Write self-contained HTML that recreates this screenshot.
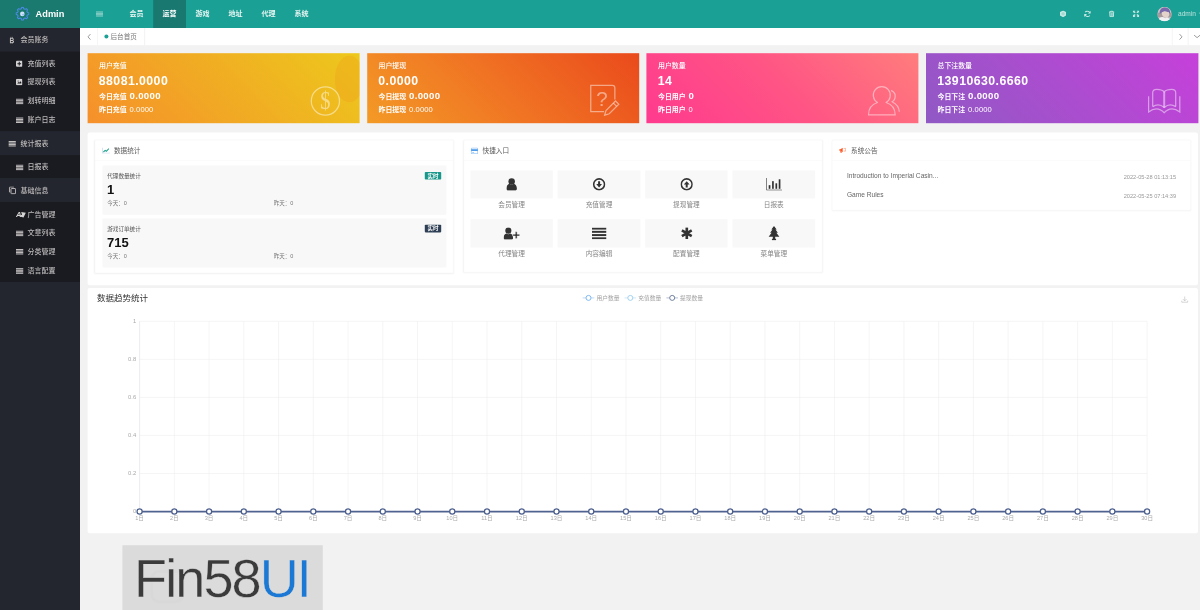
<!DOCTYPE html><html lang="zh-CN"><head><meta charset="utf-8"><title>Admin</title><style>
*{box-sizing:border-box;margin:0;padding:0}
html,body{width:1200px;height:610px;overflow:hidden;background:#f2f2f2;font-family:"Liberation Sans","Noto Sans CJK SC",sans-serif;color:#333}
.abs{position:absolute}
#root{position:absolute;left:0;top:0;width:3000px;height:1525px;transform:scale(.4);transform-origin:0 0;overflow:hidden;filter:contrast(1.0001)}
#side{position:absolute;left:0;top:0;width:200px;height:1525px;background:#23262e}
#logo{position:absolute;left:0;top:0;width:200px;height:70px;background:#1a7a6f}
#logo .t{position:absolute;left:88.75px;top:16.75px;font-size:24px;font-weight:bold;color:#fff;line-height:35px;transform:scaleX(.96);transform-origin:0 0}
.grp{position:absolute;left:0;width:200px;height:60px;background:#23262e;color:#bcb8b8;font-size:17.5px;line-height:60px;font-weight:500}
.grp span{position:absolute;left:51.25px;top:0}
.sub{position:absolute;left:0;width:200px;background:#191b21}
.it{position:absolute;left:0;width:200px;height:47.5px;color:#bcb8b8;font-size:17.5px;line-height:47.5px;font-weight:500}
.it span{position:absolute;left:68.75px;top:0}
.ic{position:absolute;display:block}
#head{position:absolute;left:200px;top:0;width:2800px;height:70px;background:#1aa094}
.nav{position:absolute;top:0;height:70px;width:82.5px;text-align:center;color:#e4f4f2;font-size:17.5px;line-height:70px;font-weight:bold}
.nav.on{background:#197971;color:#fff}
#tabs{position:absolute;left:200px;top:70px;width:2800px;height:42.5px;background:#fff}
.vsep{position:absolute;top:0;width:2.5px;height:42.5px;background:#f4f4f4}
.card{position:absolute;top:132.5px;width:680px;height:175px;color:#fff;overflow:hidden}
.card .l1{position:absolute;left:28.75px;top:20.75px;font-size:17.25px;line-height:22.5px;font-weight:500}
.card .l2{position:absolute;left:28.25px;top:51.75px;font-size:30.75px;line-height:37.5px;font-weight:bold;letter-spacing:1.1px}
.card .l3{position:absolute;left:28.75px;top:90px;font-size:17.25px;line-height:32.5px;font-weight:bold;white-space:nowrap}
.card .l3 b{font-size:24px;letter-spacing:0.8px;margin-left:2.5px}
.card .l4{position:absolute;left:28.75px;top:131.25px;font-size:17.25px;line-height:22.5px;font-weight:bold;white-space:nowrap}
.card .l4 i{font-style:normal;font-weight:normal;font-size:19px;margin-left:2.5px;letter-spacing:0.25px}
#mid{position:absolute;left:218.75px;top:331.25px;width:2776.25px;height:381.25px;background:#fff;border-radius:5px}
.pan{position:absolute;top:350px;width:897.25px;background:#fff;border:1.25px solid #f4f4f4;border-radius:3.75px;box-shadow:0 0.75px 5px rgba(0,0,0,.06)}
.pan .hd{position:absolute;left:0;top:0;width:100%;height:50.75px;border-bottom:1.25px solid #f6f6f6;font-size:16.5px;line-height:52px;color:#5a5a5a}
.pan .hd span{position:absolute;left:47px;top:0}
.sbox{position:absolute;left:17.5px;width:860px;height:123.25px;background:#f8f8f8;border-radius:2.5px}
.sbox .a{position:absolute;left:12.5px;top:16.75px;font-size:14px;line-height:20px;color:#555}
.sbox .b{position:absolute;left:12px;top:42.5px;font-size:32.5px;line-height:37.5px;font-weight:bold;color:#111}
.sbox .c{position:absolute;top:84px;font-size:13.75px;line-height:20px;color:#777}
.badge{position:absolute;right:12.5px;top:16.75px;width:40.75px;height:19px;border-radius:2px;color:#fff;font-size:13.75px;line-height:19px;text-align:center;font-weight:bold}
.q{position:absolute;width:206.5px;height:70.25px;background:#f8f8f8}
.ql{position:absolute;width:206.5px;text-align:center;font-size:16.625px;line-height:22.5px;color:#858585}
.nrow{position:absolute;left:36.5px;font-size:16.5px;line-height:22.5px;color:#666}
.ndate{position:absolute;right:35.75px;font-size:14.125px;line-height:22.5px;color:#999}
#chart{position:absolute;left:218.75px;top:720px;width:2776.25px;height:612.5px;background:#fff;border-radius:5px}
#wm{position:absolute;left:305.75px;top:1362.5px;width:501.25px;height:162.5px;background:#dbdbdb;overflow:hidden}
#wm .t{position:absolute;left:29.5px;top:8.5px;font-size:135px;line-height:150px;color:#3b3b3b;letter-spacing:-4.75px;white-space:nowrap;-webkit-text-stroke:1px #dbdbdb}
#wm .g{position:absolute;left:70px;top:62.5px;width:85px;height:82.5px;border:7.5px solid #d8d8d8;border-radius:22.5px}
#wm .u{position:absolute;left:185px;top:136.25px;font-size:13.75px;line-height:20px;letter-spacing:6.5px;color:#cbcbcb;white-space:nowrap}
#wm .t b{font-weight:normal;color:#1b78d4}
</style></head><body><div id="root"><div id="side"><div id="logo"><svg class="ic" style="left:37.75px;top:16px" width="36.5" height="36.5" viewBox="0 0 16 16"><path d="M7.07 1.06L8.93 1.06L9.41 2.68L10.76 3.24L12.25 2.44L13.56 3.75L12.76 5.24L13.32 6.59L14.94 7.07L14.94 8.93L13.32 9.41L12.76 10.76L13.56 12.25L12.25 13.56L10.76 12.76L9.41 13.32L8.93 14.94L7.07 14.94L6.59 13.32L5.24 12.76L3.75 13.56L2.44 12.25L3.24 10.76L2.68 9.41L1.06 8.93L1.06 7.07L2.68 6.59L3.24 5.24L2.44 3.75L3.75 2.44L5.24 3.24L6.59 2.68z" fill="none" stroke="#4b8ae6" stroke-width="1.15" stroke-linejoin="round"/><circle cx="7.8" cy="8.2" r="2.5" fill="#cfe0fb"/><circle cx="8.6" cy="9" r="1" fill="#8db4f2"/></svg><div class="t">Admin</div></div><div class="grp" style="top:70px"><svg class="ic" style="left:22px;top:19.75px" width="17.5" height="22.5" viewBox="0 0 7 9"><text x="0.600" y="6.600" font-size="6.600" font-weight="bold" fill="#c3bfbf" font-family="Liberation Sans, sans-serif">B</text><path d="M2.100 0.900v1M3.500 0.900v1M2.100 6.600v1M3.500 6.600v1" stroke="#c3bfbf" stroke-width=".8"/></svg><span>会员账务</span></div><div class="sub" style="top:129.25px;height:198.25px"></div><div class="it" style="top:136px"><svg class="ic" style="left:40px;top:15px" width="16.25" height="16.25" viewBox="0 0 13 13"><rect width="13" height="13" rx="2.5" fill="#d6d3d3"/><path d="M5.5 2.8h2v2.700h2.700v2H7.500v2.700h-2V7.500H2.800v-2h2.700z" fill="#191b21"/></svg><span>充值列表</span></div><div class="it" style="top:182.25px"><svg class="ic" style="left:40px;top:15px" width="16.25" height="16.25" viewBox="0 0 13 13"><rect width="13" height="13" rx="2.5" fill="#d6d3d3"/><path d="M2.5 9.500l2.500-3 1.500 1.500 2-3 2 2v2.500z" fill="#191b21"/><circle cx="4.2" cy="4.2" r="1" fill="#191b21"/></svg><span>提现列表</span></div><div class="it" style="top:229.25px"><svg class="ic" style="left:40px;top:17px;opacity:1" width="18.5" height="15" viewBox="0 0 13 10"><g fill="#c3bfbf"><rect x="0" y="0" width="13" height="2"/><rect x="0" y="2.7" width="13" height="2"/><rect x="0" y="5.4" width="13" height="2"/><rect x="0" y="8" width="13" height="2"/></g></svg><span>划转明细</span></div><div class="it" style="top:276px"><svg class="ic" style="left:40px;top:17px;opacity:1" width="18.5" height="15" viewBox="0 0 13 10"><g fill="#c3bfbf"><rect x="0" y="0" width="13" height="2"/><rect x="0" y="2.7" width="13" height="2"/><rect x="0" y="5.4" width="13" height="2"/><rect x="0" y="8" width="13" height="2"/></g></svg><span>账户日志</span></div><div class="grp" style="top:328.25px"><svg class="ic" style="left:21.25px;top:23.25px;opacity:1" width="18.5" height="15" viewBox="0 0 13 10"><g fill="#c3bfbf"><rect x="0" y="0" width="13" height="2"/><rect x="0" y="2.7" width="13" height="2"/><rect x="0" y="5.4" width="13" height="2"/><rect x="0" y="8" width="13" height="2"/></g></svg><span>统计报表</span></div><div class="sub" style="top:387.5px;height:57.5px"></div><div class="it" style="top:394px"><svg class="ic" style="left:40px;top:17px;opacity:1" width="18.5" height="15" viewBox="0 0 13 10"><g fill="#c3bfbf"><rect x="0" y="0" width="13" height="2"/><rect x="0" y="2.7" width="13" height="2"/><rect x="0" y="5.4" width="13" height="2"/><rect x="0" y="8" width="13" height="2"/></g></svg><span>日报表</span></div><div class="grp" style="top:445.75px"><svg class="ic" style="left:21.75px;top:20px" width="18.5" height="19.75" viewBox="0 0 13 14"><g fill="none" stroke="#c3bfbf" stroke-width="1.700"><rect x="3.800" y="3.800" width="8.200" height="9.200" rx="1"/><path d="M9 1H2a1 1 0 0 0-1 1v8.500"/></g></svg><span>基础信息</span></div><div class="sub" style="top:505px;height:200px"></div><div class="it" style="top:512.75px"><svg class="ic" style="left:39.5px;top:11.5px" width="25" height="22.5" viewBox="0 0 10 9"><text x="0" y="7.100" font-size="7.600" font-weight="bold" font-style="italic" fill="#d6d3d3" font-family="Liberation Sans, sans-serif">A</text><path fill="#d6d3d3" d="M5.200 2.300l4.600.9-2.300 4.700-3.600-.9.700-1.800 1.500.3z"/></svg><span>广告管理</span></div><div class="it" style="top:558.75px"><svg class="ic" style="left:40px;top:17px;opacity:1" width="18.5" height="15" viewBox="0 0 13 10"><g fill="#c3bfbf"><rect x="0" y="0" width="13" height="2"/><rect x="0" y="2.7" width="13" height="2"/><rect x="0" y="5.4" width="13" height="2"/><rect x="0" y="8" width="13" height="2"/></g></svg><span>文章列表</span></div><div class="it" style="top:604.75px"><svg class="ic" style="left:40px;top:17px;opacity:1" width="18.5" height="15" viewBox="0 0 13 10"><g fill="#c3bfbf"><rect x="0" y="0" width="13" height="2"/><rect x="0" y="2.7" width="13" height="2"/><rect x="0" y="5.4" width="13" height="2"/><rect x="0" y="8" width="13" height="2"/></g></svg><span>分类管理</span></div><div class="it" style="top:653px"><svg class="ic" style="left:40px;top:17px;opacity:1" width="18.5" height="15" viewBox="0 0 13 10"><g fill="#c3bfbf"><rect x="0" y="0" width="13" height="2"/><rect x="0" y="2.7" width="13" height="2"/><rect x="0" y="5.4" width="13" height="2"/><rect x="0" y="8" width="13" height="2"/></g></svg><span>语言配置</span></div></div><div id="head"><svg class="ic" style="left:40px;top:28px;opacity:0.62" width="17.5" height="14" viewBox="0 0 13 10"><g fill="#d9f0ed"><rect x="0" y="0" width="13" height="2"/><rect x="0" y="2.7" width="13" height="2"/><rect x="0" y="5.4" width="13" height="2"/><rect x="0" y="8" width="13" height="2"/></g></svg><div class="nav" style="left:100px">会员</div><div class="nav on" style="left:182.5px">运营</div><div class="nav" style="left:265px">游戏</div><div class="nav" style="left:347.5px">地址</div><div class="nav" style="left:430px">代理</div><div class="nav" style="left:512.5px">系统</div><svg class="ic" style="left:2449.75px;top:25.5px" width="15.5" height="17" viewBox="0 0 12.4 13.6"><path fill="#c5e8e4" d="M6.2 0l6.2 3.400v6.800L6.200 13.600 0 10.200V3.400z"/><path d="M6.2 3.200l3.200 1.800v3.600L6.200 10.400 3 8.600V5z" fill="#9fd8d1"/></svg><svg class="ic" style="left:2509.75px;top:25.75px" width="17.5" height="17.25" viewBox="0 0 15 14"><g fill="none" stroke="#c5e8e4" stroke-width="2.2"><path d="M13 5.500A6 6 0 0 0 2.500 3.500"/><path d="M2 8.500A6 6 0 0 0 12.500 10.500"/></g><path fill="#c5e8e4" d="M14.500 0.500v6H8.500zM0.500 13.500v-6H6.500z"/></svg><svg class="ic" style="left:2571.5px;top:25.75px" width="14.5" height="17.25" viewBox="0 0 12 14"><g fill="none" stroke="#c5e8e4" stroke-width="2"><path d="M0.300 3.200h11.400M4 3V1.200h4V3M2 3.500l.4 9.300h7.200l.4-9.300"/><path d="M3.600 6.200h4.800M3.600 8.400h4.800M3.600 10.600h4.800" stroke-width="1.500"/></g></svg><svg class="ic" style="left:2632px;top:26.25px" width="16.25" height="16.25" viewBox="0 0 14 14"><path fill="#c5e8e4" d="M0 0h5.800L3.900 1.900l2.300 2.300-2 2-2.300-2.300L0 5.800zM14 0v5.800l-1.900-1.900-2.300 2.300-2-2 2.300-2.300L8.200 0zM0 14V8.200l1.900 1.900 2.300-2.300 2 2-2.300 2.300L5.800 14zM14 14H8.200l1.900-1.900-2.300-2.300 2-2 2.300 2.300L14 8.200z"/></svg><svg class="ic" style="left:2693.25px;top:17.25px" width="36.5" height="36.5" viewBox="0 0 29 29"><defs><clipPath id="av"><circle cx="14.5" cy="14.5" r="14.5"/></clipPath></defs><g clip-path="url(#av)"><rect width="29" height="29" fill="#c9c3c6"/><path d="M0 12h29v9H0z" fill="#a79a9c"/><path d="M5 14C4 5 10 1 16 1.500s11 4.500 9.500 13l-3-3.500-8.500-1.500-6 3z" fill="#7a68ac"/><path d="M9 11l6-2 8 2 1 3c0 5-3 8-6.500 8S10 19 9.500 15z" fill="#e3d3cb"/><path d="M2 29c1-6 4-8.500 9-8.500l5 2 4-1c3 1 5 3 6 7.500z" fill="#f1f0f3"/></g></svg><div class="abs" style="left:2745px;top:0;font-size:16.5px;line-height:68.75px;color:#b8e1dc">admin</div><svg class="ic" style="left:2796.75px;top:31.25px" width="7.5" height="5" viewBox="0 0 8 5"><path d="M0 0h8L4 5z" fill="#c5e8e4"/></svg></div><div id="tabs"><svg class="ic" style="left:17.5px;top:13.75px" width="10" height="16.25" viewBox="0 0 8 13"><path d="M6.5 1L1.500 6.500l5 5.500" fill="none" stroke="#666" stroke-width="1.3"/></svg><div class="vsep" style="left:42.5px"></div><div class="vsep" style="left:160px"></div><div class="abs" style="left:60.5px;top:16.25px;width:10px;height:10px;border-radius:50%;background:#1aa094"></div><div class="abs" style="left:76.25px;top:0;font-size:16.5px;line-height:42.5px;color:#777">后台首页</div><div class="vsep" style="left:2729.25px;background:#f6f6f6"></div><div class="vsep" style="left:2769.25px;background:#f6f6f6"></div><svg class="ic" style="left:2746.5px;top:14px" width="10" height="16.25" viewBox="0 0 8 13"><path d="M1.500 1l5 5.500-5 5.500" fill="none" stroke="#666" stroke-width="1.3"/></svg><svg class="ic" style="left:2784.25px;top:15.5px" width="17.5" height="10" viewBox="0 0 14 8"><path d="M1 1.500l6 5 6-5" fill="none" stroke="#666" stroke-width="1.3"/></svg></div><div class="card" style="left:218.75px;background:linear-gradient(45deg,#f6902b 0%,#f1a924 45%,#edc81c 100%)"><div class="abs" style="left:618.25px;top:6.25px;width:72.5px;height:117.5px;border-radius:50%;background-color:rgba(243,150,35,.07);background-image:radial-gradient(circle,rgba(243,135,30,.5) 1.25px,rgba(243,135,30,0) 1.875px);background-size:4.75px 4.75px"></div><div class="l1">用户充值</div><div class="l2">88081.0000</div><div class="l3">今日充值 <b>0.0000</b></div><div class="l4">昨日充值 <i>0.0000</i></div><svg class="ic" style="left:556.25px;top:81.75px" width="77.5" height="77.5" viewBox="0 0 31 31"><circle cx="15.4" cy="15.4" r="14.1" fill="none" stroke="rgba(255,255,255,.47)" stroke-width="1.25"/><text x="15.4" y="23.6" text-anchor="middle" font-size="25.5" fill="rgba(255,255,255,.47)" font-family="Liberation Serif, serif" transform="translate(15.4 0) scale(.8 1) translate(-15.4 0)">$</text></svg></div><div class="card" style="left:917.5px;background:linear-gradient(45deg,#f39a26 0%,#f07223 50%,#ea4a1c 100%)"><div class="l1">用户提现</div><div class="l2">0.0000</div><div class="l3">今日提现 <b>0.0000</b></div><div class="l4">昨日提现 <i>0.0000</i></div><svg class="ic" style="left:556.5px;top:77.75px" width="80" height="82.5" viewBox="0 0 64 66"><g fill="none" stroke="rgba(255,255,255,.47)" stroke-width="2.5"><path d="M50.500 31V7.500a5 5 0 0 0-5-5H2.300V55H29"/><path d="M30.0 62.4L32.8 53.1L51.8 34.0L58.4 40.6L39.3 59.6z"/><path d="M47.6 38.3L54.1 44.8"/></g><text x="24.800" y="43.500" text-anchor="middle" font-size="41" fill="rgba(255,255,255,.47)" font-family="Liberation Sans, sans-serif">?</text></svg></div><div class="card" style="left:1616.25px;background:linear-gradient(45deg,#ff3a8e 0%,#ff5485 50%,#ff7d7c 100%)"><div class="l1">用户数量</div><div class="l2">14</div><div class="l3">今日用户 <b>0</b></div><div class="l4">昨日用户 <i>0</i></div><svg class="ic" style="left:548.75px;top:75px" width="90" height="85" viewBox="0 0 36 34"><g fill="none" stroke="rgba(255,255,255,.47)" stroke-width="1.2" stroke-linejoin="round"><path d="M2.500 31.750C2.500 25 6 21 11.500 19.300A8.500 8.500 0 1 1 20.100 19.300C25.500 21 29.200 25 29.200 31.750Z"/><path d="M25.100 7.200C28 8.500 29.300 10.500 29.200 13 29.200 15.500 28 17.500 26 18.600 30 20.500 33 24 33.300 28.500"/></g></svg></div><div class="card" style="left:2315px;background:linear-gradient(45deg,#9059c4 0%,#ab4dcf 50%,#c640da 100%);width:681.25px"><div class="l1">总下注数量</div><div class="l2">13910630.6660</div><div class="l3">今日下注 <b>0.0000</b></div><div class="l4">昨日下注 <i>0.0000</i></div><svg class="ic" style="left:552.5px;top:87.5px" width="85" height="65" viewBox="0 0 34 26"><g fill="none" stroke="rgba(255,255,255,.47)" stroke-width="1.25"><path d="M1.400 8.300V23.900C6 20.500 12 19.500 17 24.700 22 19.500 28 20.500 32.600 23.900V8.300"/><path d="M5.500 18.600V4.500C5.500 2.500 7 1.300 9.500 1.300 13 1.300 15.500 2.200 17 3.800 18.500 2.200 21 1.300 24.500 1.300 27 1.300 28.500 2.500 28.500 4.500V18.600"/><path d="M5.500 18.600C9 16.500 13.500 16.500 17 19.500 20.500 16.500 25 16.500 28.500 18.600"/><path d="M17 3.800V19.500" stroke-width="2"/></g></svg></div><div id="mid"></div><div class="pan" style="left:237px;height:333.25px"><div class="hd"><svg class="ic" style="left:16.5px;top:18px" width="20" height="15" viewBox="0 0 16 12"><path d="M0.700 0v11.300h15.300" fill="none" stroke="#a4c0e2" stroke-width="1.100"/><path d="M2.800 8.800l3.500-3.300 2.500 1.800 4.800-5.300" fill="none" stroke="#1fa38c" stroke-width="2.100"/></svg><span>数据统计</span></div><div class="sbox" style="top:62.5px"><div class="a">代理数量统计</div><div class="badge" style="background:#18978a">实时</div><div class="b">1</div><div class="c" style="left:12.5px">今天：0</div><div class="c" style="left:428.75px">昨天：0</div></div><div class="sbox" style="top:194.5px"><div class="a">游戏订单统计</div><div class="badge" style="background:#2f4056">实时</div><div class="b">715</div><div class="c" style="left:12.5px">今天：0</div><div class="c" style="left:428.75px">昨天：0</div></div></div><div class="pan" style="left:1158.5px;height:331.25px"><div class="hd"><svg class="ic" style="left:17px;top:17.5px" width="18.5" height="16.5" viewBox="0 0 14 12.500"><rect x="0.700" y="0.700" width="12.600" height="11.100" rx="1.800" fill="none" stroke="#7ab4f2" stroke-width="1.400"/><rect x="0.700" y="3.200" width="12.600" height="3" fill="#3a8fe8"/><rect x="2.600" y="8.400" width="3.600" height="1.200" fill="#7ab4f2"/></svg><span>快捷入口</span></div><div class="q" style="left:16.25px;top:75px"><svg class="ic" style="left:90.625px;top:19.25px" width="26.25" height="31.5" viewBox="0 0 20 24" fill="#333"><circle cx="10" cy="6.6" r="6.2"/><path d="M0 20.500C0 14.500 2.800 11.800 6 11c1.200 1.100 2.500 1.600 4 1.600s2.800-.5 4-1.600c3.200.8 6 3.500 6 9.500 0 2.200-1.600 3.500-3.500 3.500h-13C1.600 24 0 22.700 0 20.500z"/></svg></div><div class="ql" style="left:16.25px;top:149.5px">会员管理</div><div class="q" style="left:234.75px;top:75px"><svg class="ic" style="left:88px;top:19.25px" width="31.5" height="31.5" viewBox="0 0 20 20" fill="#333"><circle cx="10" cy="10" r="8.600" fill="none" stroke="#333" stroke-width="2.500"/><path d="M8.400 5h3.200v4.500h3L10 15 5.400 9.500h3z"/></svg></div><div class="ql" style="left:234.75px;top:149.5px">充值管理</div><div class="q" style="left:453.25px;top:75px"><svg class="ic" style="left:88px;top:19.25px" width="31.5" height="31.5" viewBox="0 0 20 20" fill="#333"><circle cx="10" cy="10" r="8.600" fill="none" stroke="#333" stroke-width="2.500"/><path d="M8.400 15h3.200v-4.500h3L10 5 5.400 10.500h3z"/></svg></div><div class="ql" style="left:453.25px;top:149.5px">提现管理</div><div class="q" style="left:671.75px;top:75px"><svg class="ic" style="left:83.375px;top:19.25px" width="40.75" height="31.5" viewBox="0 0 26 20" fill="#333"><path d="M0.800 0V19.200H26" fill="none" stroke="#666" stroke-width="1.300"/><rect x="4.300" y="11.400" width="2.700" height="5.800"/><rect x="9.700" y="5" width="2.700" height="12.200"/><rect x="15.100" y="8.400" width="2.700" height="8.800"/><rect x="20.300" y="2" width="2.700" height="15.200"/></svg></div><div class="ql" style="left:671.75px;top:149.5px">日报表</div><div class="q" style="left:16.25px;top:197.25px"><svg class="ic" style="left:83.375px;top:19.25px" width="40.75" height="31.5" viewBox="0 0 31 24" fill="#333"><circle cx="9" cy="6.600" r="5.800"/><path d="M0 20.500C0 15 2.500 12.500 5.400 11.800c1.100 1 2.300 1.400 3.600 1.400s2.500-.4 3.600-1.400c2.900.7 5.400 3.200 5.400 8.700 0 2.200-1.500 3.500-3.200 3.500H3.200C1.500 24 0 22.700 0 20.500z"/><path d="M22.300 8.500h3.400v4.800h4.800v3.400h-4.800v4.800h-3.400v-4.800h-4.800v-3.400h4.800z" stroke="#f8f8f8" stroke-width=".8"/></svg></div><div class="ql" style="left:16.25px;top:271.75px">代理管理</div><div class="q" style="left:234.75px;top:197.25px"><svg class="ic" style="left:85.5px;top:20.375px" width="36.5" height="29.25" viewBox="0 0 20 16" fill="#333"><rect x="0" y="0" width="20" height="2.700"/><rect x="0" y="4.430" width="20" height="2.700"/><rect x="0" y="8.870" width="20" height="2.700"/><rect x="0" y="13.300" width="20" height="2.700"/></svg></div><div class="ql" style="left:234.75px;top:271.75px">内容编辑</div><div class="q" style="left:453.25px;top:197.25px"><svg class="ic" style="left:88.75px;top:20px" width="30" height="30" viewBox="0 0 20 20" fill="#333"><g stroke="#333" stroke-width="4.400" stroke-linecap="butt"><path d="M10 0.500v19M1.800 5.250l16.400 9.500M18.200 5.250L1.800 14.750"/></g></svg></div><div class="ql" style="left:453.25px;top:271.75px">配置管理</div><div class="q" style="left:671.75px;top:197.25px"><svg class="ic" style="left:88.75px;top:17.125px" width="30" height="35.75" viewBox="0 0 20 24" fill="#333"><path d="M10 0l4.500 6h-2l4 5.500H14l5 6.500h-7v3.500h1.500V24h-7v-2.500H8V18H1l5-6.500H3.500l4-5.500h-2z"/></svg></div><div class="ql" style="left:671.75px;top:271.75px">菜单管理</div></div><div class="pan" style="left:2079.75px;height:175.75px"><div class="hd"><svg class="ic" style="left:17px;top:17.5px" width="17.5" height="15" viewBox="0 0 14 12"><path fill="#ff5722" d="M0 3.500h2.500L7 0.500v9L2.500 6.500H0zM2 7h2l1 4H3z"/><path d="M9 1.500h4v5.500H9" fill="none" stroke="#ff8a65" stroke-width="1.200"/></svg><span>系统公告</span></div><div class="nrow" style="top:76.5px">Introduction to Imperial Casin...</div><div class="ndate" style="top:80.5px">2022-05-28 01:13:15</div><div class="nrow" style="top:125px">Game Rules</div><div class="ndate" style="top:129.25px">2022-05-25 07:14:39</div></div><div id="chart"><div class="abs" style="left:23.75px;top:12.5px;font-size:21.25px;line-height:27.5px;color:#333">数据趋势统计</div><svg class="ic" style="left:0;top:0" width="2776.25" height="612.5" viewBox="0 0 1110.5 245" font-family="Liberation Sans, Noto Sans CJK SC, sans-serif"><g stroke="#ececee" stroke-width="0.55" fill="none"><path d="M52.00 33.30000000000001V223.5"/><path d="M86.74 33.30000000000001V223.5"/><path d="M121.48 33.30000000000001V223.5"/><path d="M156.22 33.30000000000001V223.5"/><path d="M190.97 33.30000000000001V223.5"/><path d="M225.71 33.30000000000001V223.5"/><path d="M260.45 33.30000000000001V223.5"/><path d="M295.19 33.30000000000001V223.5"/><path d="M329.93 33.30000000000001V223.5"/><path d="M364.67 33.30000000000001V223.5"/><path d="M399.41 33.30000000000001V223.5"/><path d="M434.16 33.30000000000001V223.5"/><path d="M468.90 33.30000000000001V223.5"/><path d="M503.64 33.30000000000001V223.5"/><path d="M538.38 33.30000000000001V223.5"/><path d="M573.12 33.30000000000001V223.5"/><path d="M607.86 33.30000000000001V223.5"/><path d="M642.60 33.30000000000001V223.5"/><path d="M677.34 33.30000000000001V223.5"/><path d="M712.09 33.30000000000001V223.5"/><path d="M746.83 33.30000000000001V223.5"/><path d="M781.57 33.30000000000001V223.5"/><path d="M816.31 33.30000000000001V223.5"/><path d="M851.05 33.30000000000001V223.5"/><path d="M885.79 33.30000000000001V223.5"/><path d="M920.53 33.30000000000001V223.5"/><path d="M955.28 33.30000000000001V223.5"/><path d="M990.02 33.30000000000001V223.5"/><path d="M1024.76 33.30000000000001V223.5"/><path d="M1059.50 33.30000000000001V223.5"/><path d="M52.00 33.30H1059.50"/><path d="M52.00 71.34H1059.50"/><path d="M52.00 109.38H1059.50"/><path d="M52.00 147.42H1059.50"/><path d="M52.00 185.46H1059.50"/><path d="M52.00 223.50H1059.50"/></g><path d="M52.00 33.30000000000001V223.5" stroke="#e3e5e9" stroke-width="0.6"/><g font-size="5.9" fill="#aaa" text-anchor="end"><text x="48.7" y="35.20">1</text><text x="48.7" y="73.24">0.8</text><text x="48.7" y="111.28">0.6</text><text x="48.7" y="149.32">0.4</text><text x="48.7" y="187.36">0.2</text><text x="48.7" y="225.40">0</text></g><g font-size="5.6" fill="#aaa" text-anchor="middle"><text x="52.00" y="231.80">1日</text><text x="86.74" y="231.80">2日</text><text x="121.48" y="231.80">3日</text><text x="156.22" y="231.80">4日</text><text x="190.97" y="231.80">5日</text><text x="225.71" y="231.80">6日</text><text x="260.45" y="231.80">7日</text><text x="295.19" y="231.80">8日</text><text x="329.93" y="231.80">9日</text><text x="364.67" y="231.80">10日</text><text x="399.41" y="231.80">11日</text><text x="434.16" y="231.80">12日</text><text x="468.90" y="231.80">13日</text><text x="503.64" y="231.80">14日</text><text x="538.38" y="231.80">15日</text><text x="573.12" y="231.80">16日</text><text x="607.86" y="231.80">17日</text><text x="642.60" y="231.80">18日</text><text x="677.34" y="231.80">19日</text><text x="712.09" y="231.80">20日</text><text x="746.83" y="231.80">21日</text><text x="781.57" y="231.80">22日</text><text x="816.31" y="231.80">23日</text><text x="851.05" y="231.80">24日</text><text x="885.79" y="231.80">25日</text><text x="920.53" y="231.80">26日</text><text x="955.28" y="231.80">27日</text><text x="990.02" y="231.80">28日</text><text x="1024.76" y="231.80">29日</text><text x="1059.50" y="231.80">30日</text></g><path d="M52.00 223.5H1059.50" stroke="#50628f" stroke-width="1.75" fill="none"/><g fill="#fff" stroke="#4a5d8c" stroke-width="1.25"><circle cx="52.00" cy="223.5" r="2.55"/><circle cx="86.74" cy="223.5" r="2.55"/><circle cx="121.48" cy="223.5" r="2.55"/><circle cx="156.22" cy="223.5" r="2.55"/><circle cx="190.97" cy="223.5" r="2.55"/><circle cx="225.71" cy="223.5" r="2.55"/><circle cx="260.45" cy="223.5" r="2.55"/><circle cx="295.19" cy="223.5" r="2.55"/><circle cx="329.93" cy="223.5" r="2.55"/><circle cx="364.67" cy="223.5" r="2.55"/><circle cx="399.41" cy="223.5" r="2.55"/><circle cx="434.16" cy="223.5" r="2.55"/><circle cx="468.90" cy="223.5" r="2.55"/><circle cx="503.64" cy="223.5" r="2.55"/><circle cx="538.38" cy="223.5" r="2.55"/><circle cx="573.12" cy="223.5" r="2.55"/><circle cx="607.86" cy="223.5" r="2.55"/><circle cx="642.60" cy="223.5" r="2.55"/><circle cx="677.34" cy="223.5" r="2.55"/><circle cx="712.09" cy="223.5" r="2.55"/><circle cx="746.83" cy="223.5" r="2.55"/><circle cx="781.57" cy="223.5" r="2.55"/><circle cx="816.31" cy="223.5" r="2.55"/><circle cx="851.05" cy="223.5" r="2.55"/><circle cx="885.79" cy="223.5" r="2.55"/><circle cx="920.53" cy="223.5" r="2.55"/><circle cx="955.28" cy="223.5" r="2.55"/><circle cx="990.02" cy="223.5" r="2.55"/><circle cx="1024.76" cy="223.5" r="2.55"/><circle cx="1059.50" cy="223.5" r="2.55"/></g><path d="M495.1 9.899999999999977H506.7" stroke="#6aaef0" stroke-width="0.8" opacity=".55"/><circle cx="500.9" cy="9.899999999999977" r="2.5" fill="#fff" stroke="#6aaef0" stroke-width="0.85"/><text x="508.8" y="11.7" font-size="5.75" fill="#a2a2a2">用户数量</text><path d="M536.9 9.899999999999977H548.5" stroke="#93cbee" stroke-width="0.8" opacity=".55"/><circle cx="542.7" cy="9.899999999999977" r="2.5" fill="#fff" stroke="#93cbee" stroke-width="0.85"/><text x="550.6" y="11.7" font-size="5.75" fill="#a2a2a2">充值数量</text><path d="M578.8 9.899999999999977H590.4" stroke="#5c6f92" stroke-width="0.8" opacity=".55"/><circle cx="584.6" cy="9.899999999999977" r="2.5" fill="#fff" stroke="#5c6f92" stroke-width="0.85"/><text x="592.5" y="11.7" font-size="5.75" fill="#a2a2a2">提现数量</text><g transform="translate(1093.9,8.5) scale(.92)" fill="none" stroke="#b4b4b4" stroke-width="0.6"><path d="M3.500 0v4.500M1.500 2.800l2 2 2-2M0.300 4.500v1.700h6.400V4.500"/></g></svg></div><div id="wm"><div class="g"></div><div class="t">Fin58<b>UI</b></div></div></div></body></html>
